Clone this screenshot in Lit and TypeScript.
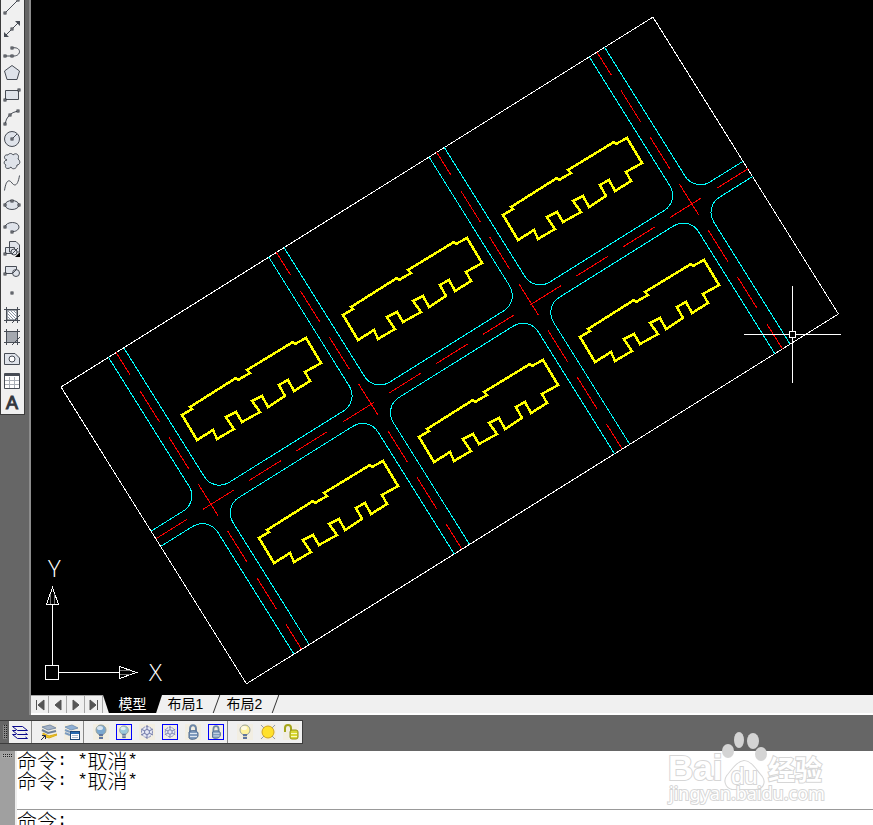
import { LitElement, html, svg, css } from "lit";
import { customElement } from "lit/decorators.js";

const grip = (x: number, y: number) =>
  svg`<rect class="grip" x=${x - 1} y=${y - 1} width="2" height="2"></rect>`;

const drawTools = [
  { name: "Line", art: svg`<path d="M2 15 15 2"></path>${grip(2, 15)}${grip(15, 2)}` },
  { name: "Construction line", art: svg`<path d="M2 16 16 2"></path><path class="solid" d="M1 17V12L6 17ZM17 1V6L12 1Z"></path>${grip(9, 9)}` },
  { name: "Polyline", art: svg`<path d="M2 14H9M9 6C19 4 19 15 9 14"></path>${grip(2, 14)}${grip(9, 14)}${grip(9, 6)}` },
  { name: "Polygon", art: svg`<path class="shade" d="M9 1.5 16.5 7 14 15.5H4L1.5 7Z"></path>` },
  { name: "Rectangle", art: svg`<path class="shade" d="M2.5 4.5H15.5V13.5H2.5Z"></path>${grip(2, 14)}${grip(16, 4)}` },
  { name: "Arc", art: svg`<path d="M2 16Q4 5 15 3"></path>${grip(2, 16)}${grip(7, 7)}${grip(15, 3)}` },
  { name: "Circle", art: svg`<circle class="shade" cx="9" cy="9" r="7.5"></circle><path d="M9 9 14 4"></path>${grip(9, 9)}` },
  { name: "Revision cloud", art: svg`<path class="shade" d="M4 8C0 7 1 2 5 3C6 1 9 1 10 3C13 0 17 3 15 7C18 9 17 13 14 13C14 17 9 18 8 15C5 18 1 16 3 13C0 12 1 8 4 8Z"></path>` },
  { name: "Spline", art: svg`<path d="M1.5 16.5C3 6 6 5 9 9S15 11 16.5 1.5"></path>` },
  { name: "Ellipse", art: svg`<ellipse class="shade" cx="9" cy="9" rx="7" ry="4.5"></ellipse>${grip(2, 9)}${grip(16, 9)}${grip(9, 5)}` },
  { name: "Ellipse arc", art: svg`<path class="shade" d="M2 9C3 3 16 3 16 9C16 12 12 14 9 13.5"></path>${grip(2, 9)}${grip(9, 14)}` },
  { name: "Insert block", art: svg`<path class="shade" d="M6.5 1.5H13L16.5 5V12H6.5ZM2.5 7.5H11.5V13.5H2.5Z"></path><circle class="shade" cx="11" cy="12" r="3"></circle><path d="M9 14 15 8"></path>${grip(2, 14)}<path class="black" d="M17 12V17H12Z"></path>` },
  { name: "Make block", art: svg`<path class="shade" d="M2.5 4.5H13.5V11.5H2.5Z"></path><circle class="shade" cx="13" cy="11" r="3.5"></circle><path d="M10 11 13 8"></path>${grip(2, 12)}` },
  { name: "Point", art: grip(9, 9) },
  { name: "Hatch", art: svg`<path class="white" d="M4 4H14V14H4Z"></path><path class="hatch" d="M4 10 8 14M4 7 11 14M4 4 14 14M7 4 14 11M10 4 14 8"></path><path d="M1 3.5H17M1 14.5H17M3.5 1V17M14.5 1V17M9 17 17 9"></path>` },
  { name: "Gradient", art: svg`<path class="fade" d="M4 4H14V14H4Z"></path><path d="M1 3.5H17M1 14.5H17M3.5 1V17M14.5 1V17M9 17 17 9"></path>` },
  { name: "Region", art: svg`<path class="shade" d="M1.5 3.5H12L16.5 8V14.5H1.5Z"></path><circle class="white" cx="9" cy="9" r="3"></circle>` },
  { name: "Table", art: svg`<path class="white" d="M1.5 1.5H16.5V16.5H1.5Z"></path><path class="solid" d="M2 2H16V4H2Z"></path><path class="rule" d="M2 8.5H16M2 12.5H16M6.5 5V16M11.5 5V16"></path>` },
  { name: "Multiline text", art: svg`<text class="letter" x="9" y="15" text-anchor="middle">A</text>` },
];

const bulb = (glass: string) => svg`
  <circle cx="9" cy="7" r="5" fill=${glass} stroke="#98a29c"></circle>
  <ellipse cx="8" cy="5" rx="3" ry="2" fill="#fff" opacity=".7"></ellipse>
  <path d="M7 11H11V16H7Z" fill="#6176a0"></path><path d="M7 13.5H11" stroke="#d7d7bb"></path>`;
const flake = svg`<circle cx="9" cy="9" r="5.5" fill="#e6e8f4" stroke="#8088b4" stroke-dasharray="3 1"></circle>
  <path d="M9 2V16M3 6 15 12M3 12 15 6" stroke="#7079a8" fill="none"></path>
  <circle cx="9" cy="9" r="2.5" fill="#e6e8f4" stroke="#7079a8"></circle>`;
const lock = svg`<path d="M6 9V6C6 1 12 1 12 6V9" fill="none" stroke="#6d86a5" stroke-width="2"></path>
  <path d="M5 9C7 7 13 7 14 10V13C13 17 6 17 5 15Z" fill="#7f9bbd" stroke="#4e6a8e"></path>
  <path d="M6 10.5H13M6 13.5H13" stroke="#dce6f0"></path>`;
const stack = svg`<path d="M2 4 10 2 16 5 8 7Z" fill="#a4b4c8" stroke="#7c8ea6"></path><path d="M2 7 8 10 16 8" fill="none" stroke="#6d7f99" stroke-width="2"></path>
  <path d="M3 10 9 13 17 11V12L9 15 3 13Z" fill="#f0c820" stroke="#d8ab18"></path>`;

const layerTools = [
  { name: "Layer properties", kind: "plain", art: svg`<path d="M1.5 3.5H11.5L16.5 7.5H6.5ZM1.5 7.500 6.500 11.500H16.500L14.500 10M1.500 11.500 6.500 15.500H16.500L14.500 14M1.500 7.500H5M1.500 11.500H5" fill="none" stroke="#0a0a8c"></path>` },
  { name: "Make current", kind: "split", art: svg`${stack}<path d="M1 17 5 13M2 12.500H5.500V16" stroke="#222a50" fill="none"></path>` },
  { name: "Layer states", kind: "", art: svg`<path d="M2 4 9 2 15 5 8 7Z" fill="#8fb0d4" stroke="#7c96b4"></path><path d="M2 7 7 9M2 10 7 12" stroke="#7c9cc0" stroke-width="2"></path><rect x="7.5" y="8.5" width="9" height="8" fill="#fff" stroke="#1b4777"></rect><path d="M8 10H16" stroke="#276bb0" stroke-width="2"></path><path d="M9 12.5H15M9 14.500H15" stroke="#a8bacb"></path>` },
  { name: "Turn layer off", kind: "split", art: bulb("#7ba8cf") },
  { name: "Turn other layers off", kind: "framed", art: bulb("#9cc7d9") },
  { name: "Freeze layer", kind: "", art: flake },
  { name: "Freeze other layers", kind: "framed", art: flake },
  { name: "Lock layer", kind: "", art: lock },
  { name: "Lock other layers", kind: "framed", art: lock },
  { name: "Turn all layers on", kind: "split", art: bulb("#fff29a") },
  { name: "Thaw all layers", kind: "", art: svg`<path d="M2 2 16 16M16 2 2 16" stroke="#8a98b4"></path><circle cx="9" cy="9" r="6" fill="#ffe12b" stroke="#d2a51c"></circle>` },
  { name: "Unlock all layers", kind: "", art: svg`<path d="M3 9V5C3 1 9 1 9 5V8" fill="none" stroke="#a4a51a" stroke-width="2"></path><rect x="8" y="7" width="8" height="9" rx="2" fill="#d8d832" stroke="#96941c"></rect><path d="M9 10.5H15M9 13.500H15" stroke="#fafabe"></path>` },
];

const steps = [
  { name: "First layout", d: "M5.5 4V14M13 4V14L7 9Z" },
  { name: "Previous layout", d: "M12 4V14L6 9Z" },
  { name: "Next layout", d: "M6 4V14L12 9Z" },
  { name: "Last layout", d: "M5 4V14L11 9ZM12.5 4V14" },
];

/* Site plan, in plan units with the plot's corner at the origin. */
const PLOT = { w: 698, h: 350 };
const AVENUES = [65, 254, 443, 632];
const STREET = 179;
const HALF = 9;
const R = 18;

const blocks = [0, ...AVENUES].map((a, i) => {
  const first = i === 0;
  const last = i === AVENUES.length;
  const l = a + HALF;
  const r = last ? PLOT.w : AVENUES[i] - HALF;
  const t = STREET - HALF;
  const b = STREET + HALF;
  const upper = first
    ? `M${r} 0V${t - R}A${R} ${R} 0 0 1 ${r - R} ${t}H0`
    : last
      ? `M${l} 0V${t - R}A${R} ${R} 0 0 0 ${l + R} ${t}H${r}`
      : `M${l} 0V${t - R}A${R} ${R} 0 0 0 ${l + R} ${t}H${r - R}A${R} ${R} 0 0 0 ${r} ${t - R}V0`;
  const lower = first
    ? `M${r} ${PLOT.h}V${b + R}A${R} ${R} 0 0 0 ${r - R} ${b}H0`
    : last
      ? `M${l} ${PLOT.h}V${b + R}A${R} ${R} 0 0 1 ${l + R} ${b}H${r}`
      : `M${l} ${PLOT.h}V${b + R}A${R} ${R} 0 0 1 ${l + R} ${b}H${r - R}A${R} ${R} 0 0 1 ${r} ${b + R}V${PLOT.h}`;
  return upper + lower;
});

const HOUSE =
  "M503 215 518 240 534 230 538 239 555 229 547 217 557 212 563 222 581 212 573 201 583 196 589 207 606 196 600 185 609 180 615 191 631 181 626 172 642 163 627 138 616 144 614 142 568 170 571 173 559 180 557 178 511 207 513 209Z";
const houses = [[0, 0], [-160, 100], [-321, 200], [77, 122], [-84, 222], [-244, 323]];

@customElement("app-root")
export class AppRoot extends LitElement {
  static styles = css`
    :host {
      display: grid;
      grid-template-rows: minmax(0, 1fr) auto auto;
      height: 100vh;
      position: relative;
      overflow: hidden;
      background: #666;
      font-family: "Liberation Sans", "Noto Sans CJK SC", sans-serif;
    }
    * { box-sizing: border-box; }
    button {
      margin: 0;
      padding: 0;
      border: 0;
      background: none;
      font: inherit;
      color: inherit;
    }
    svg { display: block; }
    .work { display: grid; grid-template-columns: 29px minmax(0, 1fr); min-height: 0; }
    .dock { overflow: hidden; }
    .tools {
      width: 25px;
      margin-top: -5px;
      padding-right: 1px;
      border: 1px solid #3c3c3c;
      background: #f0f0f0;
      display: flex;
      flex-direction: column;
      align-items: center;
    }
    .tool { width: 22px; height: 22px; display: grid; place-items: center; }
    .tool svg { width: 18px; height: 18px; fill: none; stroke: #474c55; }
    .tool .grip { fill: #fff; stroke: #30353d; }
    .tool .shade { fill: #dfe3ea; }
    .tool .white { fill: #fff; }
    .tool .fade { fill: #a5a9b0; stroke: none; }
    .tool .hatch { stroke: #8b95a5; }
    .tool .solid { fill: #474c55; stroke: none; }
    .tool .black { fill: #000; stroke: none; }
    .tool .rule { stroke: #a9aeb6; }
    .tool .letter { fill: #33373e; stroke: #33373e; font: 18px "Liberation Sans", sans-serif; }
    .sheet {
      display: grid;
      grid-template-rows: minmax(0, 1fr) 20px;
      min-height: 0;
      border-left: 2px solid #8c8c8c;
    }
    .canvas { width: 100%; height: 100%; background: #000; fill: none; shape-rendering: crispEdges; }
    .plot, .ucs, .cursor { stroke: #fff; }
    .kerb { stroke: #0ff; }
    .centre { stroke: #f00; stroke-dasharray: 37 18.1; }
    .avenue { stroke-dashoffset: 10; }
    .house { stroke: #ff0; stroke-width: 2.5; }
    .fin { stroke: #777; }
    .axis { fill: #fff; font: 300 24px "Open Sans", "Noto Sans", sans-serif; }
    .tabs { display: flex; background: #f0f0f0; border-bottom: 2px solid #fff; font-size: 14px; }
    .step { width: 18px; border-right: 1px solid #a8a8a8; border-top: 1px solid #a8a8a8; }
    .step svg { width: 17px; height: 18px; fill: #555; stroke: #555; stroke-width: 1; }
    .tab { position: relative; width: 59px; height: 18px; line-height: 18px; text-align: center; }
    .tab::after {
      content: "";
      position: absolute;
      right: -2px;
      top: 0;
      width: 1px;
      height: 100%;
      background: #333;
      transform: skewX(-20deg);
    }
    .tab.on {
      margin-right: -6px;
      color: #fff;
      background: #000;
      clip-path: polygon(0 0, 100% 0, 90% 100%, 10% 100%);
    }
    .strip { padding: 5px 0 7px; }
    .layers {
      display: flex;
      align-items: center;
      width: 303px;
      height: 24px;
      border: 1px solid #3c3c3c;
      border-left: 0;
      background: #f0f0f0;
    }
    .handle { width: 9px; height: 100%; background: #666; display: grid; place-items: center; }
    .handle::before {
      content: "";
      width: 4px;
      height: 14px;
      background: conic-gradient(#222 25%, #888 0) 0 0 / 2px 2px;
    }
    .layer { width: 23px; height: 22px; display: grid; place-items: center; }
    .layer svg { width: 16px; height: 16px; background: #f2eee2; }
    .layer.plain { width: 22px; }
    .layer.plain svg { background: none; }
    .layer.framed svg { box-shadow: 0 0 0 1px #00f; width: 14px; }
    .layer.framed svg { height: 14px; }
    .layer.split { border-left: 1px solid #888; width: 29px; padding-left: 5px; }
    .command {
      display: grid;
      grid-template-columns: 17px minmax(0, 1fr);
      grid-template-rows: 58px 16px;
      background: #fff;
      font: 300 20px/20px "Noto Sans CJK SC", sans-serif;
      color: #000;
    }
    .rail { grid-row: 1 / 3; background: #a0a0a0; border-right: 2px solid #eee; padding: 3px 2px; }
    .rail::before {
      content: "";
      display: block;
      height: 4px;
      background: conic-gradient(#222 25%, #aaa 0) 0 0 / 2px 2px;
    }
    .line { display: flex; height: 20px; }
    .mono { font: 17px/20px "Liberation Mono", monospace; white-space: pre; }
    .prompt { display: flex; border-top: 1px solid #999; padding-top: 1px; overflow: hidden; }
    .entry { flex: 1; min-width: 0; height: 20px; border: 0; padding: 0; outline: 0; background: none; font: inherit; }
    .mark { position: absolute; right: 40px; bottom: 16px; width: 168px; height: 80px; fill: #fff; stroke: #d6d6d6; paint-order: stroke; stroke-width: 2; }
    .mark .latin { font: bold 35px "Liberation Sans", sans-serif; }
    .mark .small { font: 24px "Liberation Sans", sans-serif; }
    .mark .han { font: bold 27px "Noto Sans CJK SC", sans-serif; }
    .mark .site { font: 18px "Noto Sans", sans-serif; }
    .mark .paw { fill: #d4d4d4; stroke: none; }
  `;

  render() {
    return html`
      <main class="work">
        <aside class="dock">
          <nav class="tools" aria-label="Draw">
            ${drawTools.map((t) => html`<button class="tool" aria-label=${t.name}><svg viewBox="0 0 18 18">${t.art}</svg></button>`)}
          </nav>
        </aside>
        <section class="sheet">
          ${this.drawing()}
          <nav class="tabs">
            ${steps.map((s) => html`<button class="step" aria-label=${s.name}><svg viewBox="0 0 17 18"><path d=${s.d}></path></svg></button>`)}
            <button class="tab on">模型</button>
            <button class="tab">布局1</button>
            <button class="tab">布局2</button>
          </nav>
        </section>
      </main>
      <div class="strip">
        <nav class="layers" aria-label="Layers">
          <span class="handle"></span>
          ${layerTools.map((t) => html`<button class="layer ${t.kind}" aria-label=${t.name}><svg viewBox="1 1 16 16">${t.art}</svg></button>`)}
        </nav>
      </div>
      <section class="command">
        <span class="rail"></span>
        <div class="log">
          ${[1, 2].map(() => html`<div class="line">命令<span class="mono">: *</span>取消<span class="mono">*</span></div>`)}
        </div>
        <div class="prompt">
          <label class="line" for="entry">命令<span class="mono">: </span></label>
          <input class="entry" id="entry" />
        </div>
      </section>
      <svg class="mark" viewBox="0 0 168 80">
        <text class="latin" x="3" y="51">Bai</text>
        <path d="M79 32C86 32 91 41 97 48C101 54 97 61 89 60H71C62 61 58 53 62 47C67 41 72 33 79 32Z"></path>
        <text class="small" x="66" y="55">du</text>
        <text class="han" x="103" y="51">经验</text>
        <text class="site" x="4" y="71">jingyan.baidu.com</text>
        <g class="paw">
          <ellipse cx="63" cy="22" rx="6" ry="7"></ellipse><ellipse cx="74" cy="11" rx="5" ry="8"></ellipse>
          <ellipse cx="88" cy="12" rx="6" ry="8"></ellipse><ellipse cx="96" cy="25" rx="6" ry="7"></ellipse>
        </g>
      </svg>
    `;
  }

  private drawing() {
    return html`
      <svg class="canvas" viewBox="31 0 842 695" preserveAspectRatio="xMinYMin meet">
        <g transform="translate(61 387) rotate(-32)">
          <path class="plot" d="M0 0H${PLOT.w}V${PLOT.h}H0Z"></path>
          ${blocks.map((d) => svg`<path class="kerb" d=${d}></path>`)}
          <path class="centre" d="M0 ${STREET}H${PLOT.w}"></path>
          ${AVENUES.map((x) => svg`<path class="centre avenue" d="M${x} 0V${PLOT.h}"></path>`)}
        </g>
        ${houses.map(([x, y]) => svg`<path class="house" d=${HOUSE} transform="translate(${x} ${y})"></path>`)}
        <g class="ucs">
          <path d="M45.5 665.5H58.5V679.5H45.5ZM52.5 665V605M46.5 604.5H58.5L52.5 587.5ZM59 672.5H119M119.5 666.5V678.5L136.5 672.5Z"></path>
          <path class="fin" d="M50.5 604V594M54.5 604V594M120 670.5H130M120 674.5H130"></path>
        </g>
        <text class="axis" x="48" y="577">Y</text>
        <text class="axis" x="149" y="681">X</text>
        <path class="cursor" d="M744 334.5H789M796 334.5H841M792.5 286V331M792.5 338V383M789.5 331.5H795.5V337.5H789.5Z"></path>
      </svg>
    `;
  }
}
